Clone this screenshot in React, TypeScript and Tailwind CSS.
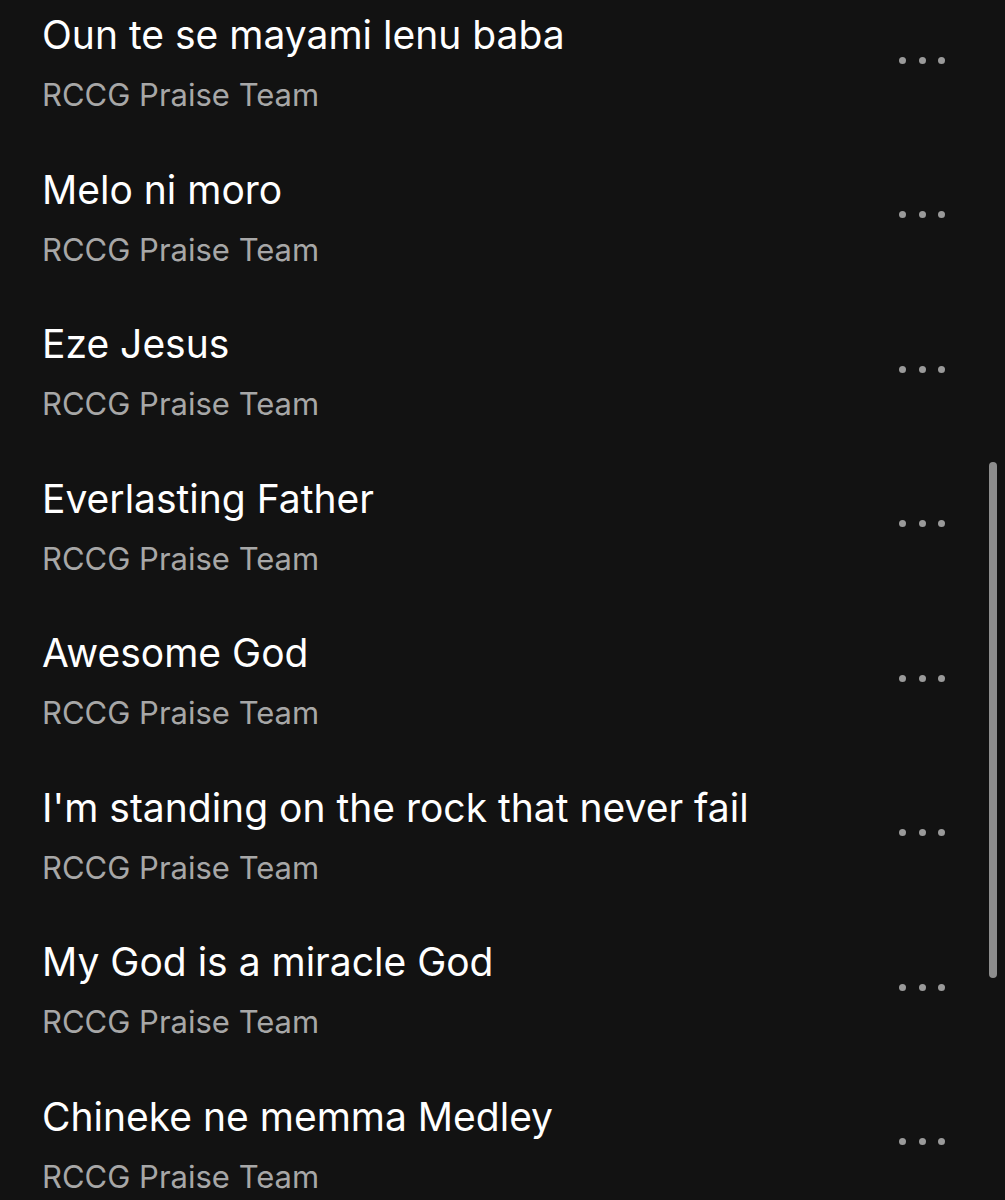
const songs = [
  "Oun te se mayami lenu baba",
  "Melo ni moro",
  "Eze Jesus",
  "Everlasting Father",
  "Awesome God",
  "I'm standing on the rock that never fail",
  "My God is a miracle God",
  "Chineke ne memma Medley",
];

const SongRow = ({ title, artist }: { title: string; artist: string }) => {
  return (
    <div className="h-[154.5px] flex items-center justify-between pl-[42px] pr-[60px]">
      <div className="flex flex-col">
        <div className="text-white text-[39px] leading-[50px] whitespace-nowrap">{title}</div>
        <div className="text-[#a7a7a7] text-[31px] leading-[50px] mt-[10px] whitespace-nowrap">{artist}</div>
      </div>
      <button className="flex items-center gap-[12.5px] mb-[10px]">
        <span className="w-[7px] h-[7px] rounded-full bg-[#9a9a9a]" />
        <span className="w-[7px] h-[7px] rounded-full bg-[#9a9a9a]" />
        <span className="w-[7px] h-[7px] rounded-full bg-[#9a9a9a]" />
      </button>
    </div>
  );
};

export default function App() {
  return (
    <div
      className="relative w-[1005px] h-[1200px] overflow-hidden bg-[#121212]"
      style={{ fontFamily: "Inter, 'Noto Sans', sans-serif" }}
    >
      <div className="-mt-[12.25px]">
        {songs.map((s) => (
          <SongRow key={s} title={s} artist="RCCG Praise Team" />
        ))}
      </div>

      {/* scrollbar thumb */}
      <div className="absolute right-[8px] top-[462px] w-[8px] h-[516px] rounded-full bg-[#8d8d8d]" />
    </div>
  );
}
